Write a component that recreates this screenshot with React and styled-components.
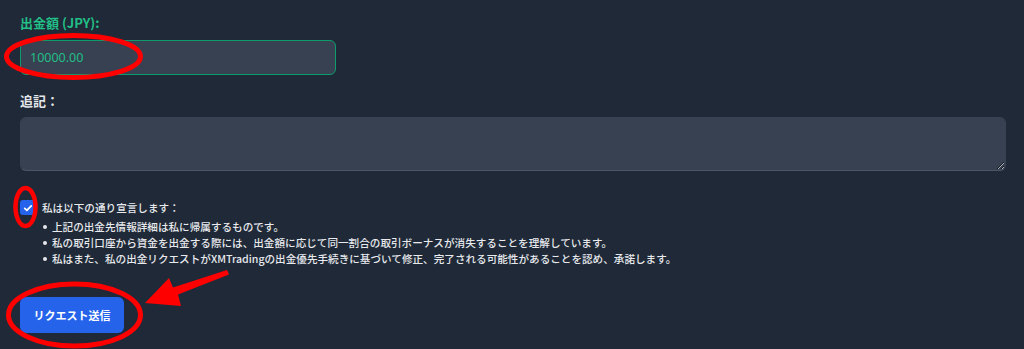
import React from "react";
import styled, { createGlobalStyle } from "styled-components";

const Global = createGlobalStyle`
  html, body { margin: 0; padding: 0; background: #1f2937; }
  body { font-family: "Noto Sans CJK JP", "Noto Sans", sans-serif; color: #e5e7eb; }
  * { box-sizing: border-box; }
`;

const Page = styled.div`
  position: relative;
  width: 1024px;
  height: 349px;
  overflow: hidden;
  background: #1f2937;
  padding: 15px 18px 0 20px;
  display: flex;
  flex-direction: column;
`;

const Label = styled.label`
  display: block;
  font-size: 13px;
  line-height: 16px;
  font-weight: 600;
  color: ${(p) => (p.$accent ? "#22bf87" : "#e5e7eb")};
  margin-top: ${(p) => p.$mt || 0}px;
`;

const AmountInput = styled.input`
  width: 316px;
  height: 35px;
  margin-top: 9px;
  background: #374151;
  border: 1px solid #0e9b6b;
  border-radius: 6px;
  padding: 0 9px;
  font-family: "Noto Sans", "Noto Sans CJK JP", sans-serif;
  font-size: 12.5px;
  color: #22bf87;
  outline: none;
`;

const Memo = styled.textarea`
  width: 986px;
  height: 54px;
  margin-top: 8px;
  background: #374151;
  border: 1px solid #374151;
  border-bottom-color: #4b5565;
  border-radius: 6px;
  padding: 8px 10px;
  color: #e5e7eb;
  font-family: inherit;
  outline: none;
  resize: vertical;
`;

const DeclRow = styled.div`
  display: flex;
  align-items: flex-start;
  gap: 7px;
  margin-top: 29px;
  font-size: 10.6px;
  font-weight: 500;
  line-height: 16px;
  color: #e8eaee;
`;

const Check = styled.span`
  flex: none;
  width: 15px;
  height: 15px;
  border-radius: 3px;
  background: #2563eb;
  display: flex;
  align-items: center;
  justify-content: center;
`;

const DeclBody = styled.div`
  display: flex;
  flex-direction: column;
`;

const List = styled.ul`
  list-style: none;
  margin: 3px 0 0;
  padding: 0;
`;

const Item = styled.li`
  position: relative;
  padding-left: 10px;
  &::before {
    content: "";
    position: absolute;
    left: 1px;
    top: 6px;
    width: 4px;
    height: 4px;
    border-radius: 50%;
    background: #e5e7eb;
  }
`;

const Submit = styled.button`
  align-self: flex-start;
  margin-top: 30px;
  height: 36px;
  width: 104px;
  padding: 0;
  border: none;
  border-radius: 6px;
  background: #2563eb;
  color: #ffffff;
  font-family: "Noto Sans CJK JP", sans-serif;
  font-size: 11px;
  font-weight: 700;
  cursor: pointer;
`;

const Overlay = styled.svg`
  position: absolute;
  left: 0;
  top: 0;
  pointer-events: none;
`;

export default function App() {
  return (
    <>
      <Global />
      <Page>
        <Label $accent>出金額 (JPY):</Label>
        <AmountInput defaultValue="10000.00" />
        <Label $mt={18}>追記：</Label>
        <Memo />
        <DeclRow>
          <Check>
            <svg width="10" height="10" viewBox="0 0 16 16">
              <path d="M2.8 8.6l3.4 3.3L13.2 4.6" fill="none" stroke="#fff" strokeWidth="2.8" strokeLinecap="round" strokeLinejoin="round" />
            </svg>
          </Check>
          <DeclBody>
            <span>私は以下の通り宣言します：</span>
            <List>
              <Item>上記の出金先情報詳細は私に帰属するものです。</Item>
              <Item>私の取引口座から資金を出金する際には、出金額に応じて同一割合の取引ボーナスが消失することを理解しています。</Item>
              <Item>私はまた、私の出金リクエストがXMTradingの出金優先手続きに基づいて修正、完了される可能性があることを認め、承諾します。</Item>
            </List>
          </DeclBody>
        </DeclRow>
        <Submit>リクエスト送信</Submit>
        <Overlay width="1024" height="349" viewBox="0 0 1024 349">
          <ellipse cx="73.5" cy="56.5" rx="67" ry="21" fill="none" stroke="#ff0000" strokeWidth="5" />
          <ellipse cx="25.5" cy="207" rx="10" ry="19" fill="none" stroke="#ff0000" strokeWidth="4.5" />
          <ellipse cx="74.5" cy="315" rx="66" ry="31" fill="none" stroke="#ff0000" strokeWidth="5" />
          <path d="M145 303 L169 278 L173 287.5 L227 270 L229 274.5 L178 294.5 L181 306 Z" fill="#ff0000" />
        </Overlay>
      </Page>
    </>
  );
}
